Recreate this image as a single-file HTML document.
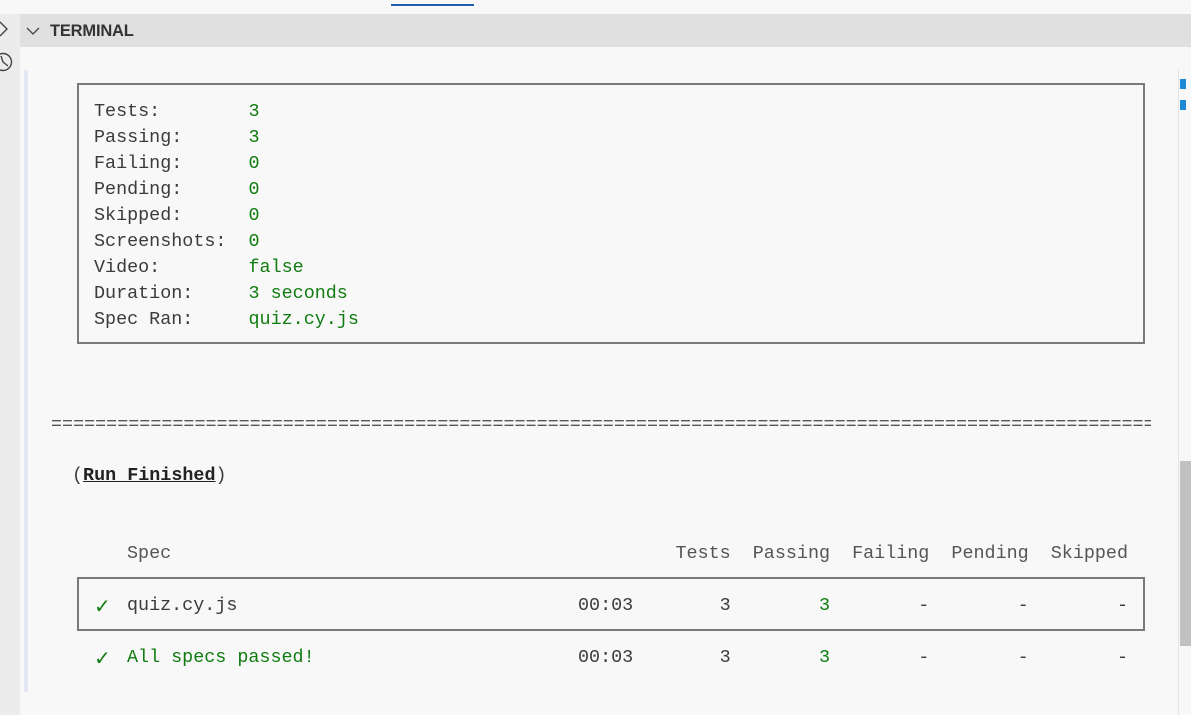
<!DOCTYPE html>
<html><head><meta charset="utf-8"><style>
body{margin:0;width:1191px;height:715px;background:#f8f8f8;position:relative;overflow:hidden;font-family:"Liberation Mono",monospace;}
.t{position:absolute;font-size:18.4px;line-height:26px;white-space:pre;color:#3b3b3b;}
.g{color:#107c10}
.r{text-align:right}
.ck{font-family:"DejaVu Sans",sans-serif;font-weight:bold;font-size:20px}
</style></head><body>
<div style="position:absolute;left:391px;top:4px;width:83px;height:2px;background:#1f5fa8"></div>
<div style="position:absolute;left:0;top:14px;width:20px;height:701px;background:#ececec"></div>
<div style="position:absolute;left:20px;top:14px;width:1171px;height:33px;background:#e0e0e0"></div>
<svg style="position:absolute;left:0;top:18px" width="20" height="60">
<path d="M0 4 L7 11 L0 18" fill="none" stroke="#444" stroke-width="1.4"/>
<circle cx="3" cy="44" r="8.5" fill="none" stroke="#444" stroke-width="1.4"/>
<path d="M1 38 L3 44 L8 48" fill="none" stroke="#444" stroke-width="1.4"/>
</svg>
<svg style="position:absolute;left:26px;top:25px" width="16" height="12"><path d="M1 3 L7 9 L13 3" fill="none" stroke="#444" stroke-width="1.3"/></svg>
<div style="position:absolute;left:50px;top:19px;font:bold 16.5px 'Liberation Sans',sans-serif;color:#333;line-height:24px;letter-spacing:-0.2px">TERMINAL</div>
<div style="position:absolute;left:24px;top:70px;width:4px;height:622px;background:#e4e6f1"></div>
<div style="position:absolute;left:1178px;top:70px;width:1px;height:645px;background:#e4e4e4"></div>
<div style="position:absolute;left:1180px;top:79px;width:6px;height:10px;background:#1e8ad6"></div>
<div style="position:absolute;left:1180px;top:100px;width:6px;height:10px;background:#1e8ad6"></div>
<div style="position:absolute;left:1180px;top:461px;width:11px;height:185px;background:#c1c1c1"></div>
<div style="position:absolute;left:77px;top:83px;width:1064px;height:257px;border:2px solid #7a7a7a"></div>
<div class="t" style="left:94px;top:99px">Tests:        <span class="g">3</span>
Passing:      <span class="g">3</span>
Failing:      <span class="g">0</span>
Pending:      <span class="g">0</span>
Skipped:      <span class="g">0</span>
Screenshots:  <span class="g">0</span>
Video:        <span class="g">false</span>
Duration:     <span class="g">3 seconds</span>
Spec Ran:     <span class="g">quiz.cy.js</span></div>
<div class="t" style="left:51px;top:412px;width:1100px;overflow:hidden;color:#555">====================================================================================================</div>
<div class="t" style="left:72px;top:463px">(<b style="text-decoration:underline;color:#222">Run Finished</b>)</div>
<div class="t" style="left:127px;top:541px;color:#555">Spec</div>
<div class="t r" style="left:600px;width:528px;top:541px;color:#555">Tests  Passing  Failing  Pending  Skipped</div>
<div style="position:absolute;left:77px;top:577px;width:1064px;height:50px;border:2px solid #7a7a7a"></div>
<div class="t" style="left:94px;top:593px"><span class="g ck">✓</span></div>
<div class="t" style="left:127px;top:593px">quiz.cy.js</div>
<div class="t" style="left:578px;top:593px">00:03</div>
<div class="t r" style="left:600px;width:528px;top:593px">3        <span class="g">3</span>        -        -        -</div>
<div class="t g" style="left:94px;top:645px"><span class="ck">✓</span></div>
<div class="t g" style="left:127px;top:645px">All specs passed!</div>
<div class="t" style="left:578px;top:645px">00:03</div>
<div class="t r" style="left:600px;width:528px;top:645px">3        <span class="g">3</span>        -        -        -</div>
</body></html>
